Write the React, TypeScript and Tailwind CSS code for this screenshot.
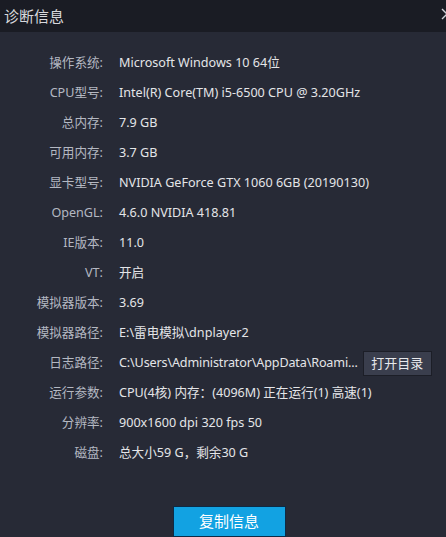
import React from "react";

const rows: { label: string; value: string; action?: string }[] = [
  { label: "操作系统:", value: "Microsoft Windows 10 64位" },
  { label: "CPU型号:", value: "Intel(R) Core(TM) i5-6500 CPU @ 3.20GHz" },
  { label: "总内存:", value: "7.9 GB" },
  { label: "可用内存:", value: "3.7 GB" },
  { label: "显卡型号:", value: "NVIDIA GeForce GTX 1060 6GB (20190130)" },
  { label: "OpenGL:", value: "4.6.0 NVIDIA 418.81" },
  { label: "IE版本:", value: "11.0" },
  { label: "VT:", value: "开启" },
  { label: "模拟器版本:", value: "3.69" },
  { label: "模拟器路径:", value: "E:\\雷电模拟\\dnplayer2" },
  { label: "日志路径:", value: "C:\\Users\\Administrator\\AppData\\Roami...", action: "打开目录" },
  { label: "运行参数:", value: "CPU(4核) 内存：(4096M) 正在运行(1) 高速(1)" },
  { label: "分辨率:", value: "900x1600 dpi 320 fps 50" },
  { label: "磁盘:", value: "总大小59 G，剩余30 G" },
];

export default function App() {
  return (
    <div
      className="w-[446px] h-[537px] overflow-hidden flex flex-col bg-[#272a36]"
      style={{ fontFamily: '"Noto Sans", "Noto Sans CJK SC", sans-serif' }}
    >
      {/* Title bar */}
      <div className="h-[32px] shrink-0 flex items-center justify-between bg-[#1a1c24] pl-[4px]">
        <span className="text-[15px] text-[#d8d9dd] leading-none">诊断信息</span>
        <svg className="mr-[-7px] mb-[4px]" width="12" height="12" viewBox="0 0 12 12">
          <path d="M1 1 L11 11 M11 1 L1 11" stroke="#d0d2d8" strokeWidth="1.4" />
        </svg>
      </div>

      {/* Info rows */}
      <div className="pt-[16px] flex flex-col">
        {rows.map(({ label, value, action }) => (
          <div key={label} className="h-[30px] flex items-center text-[12.6px]">
            <span className="w-[103px] shrink-0 text-right text-[#b4b8c2]">{label}</span>
            <span
              className={
                action
                  ? "ml-[16px] shrink-0 text-[#e4e5e8] whitespace-nowrap tracking-[-0.15px]"
                  : "ml-[16px] shrink-0 text-[#e4e5e8] whitespace-nowrap"
              }
            >
              {value}
            </span>
            {action && (
              <button className="ml-[5px] w-[69px] h-[25px] shrink-0 whitespace-nowrap bg-[#3a3e4d] border border-[#1c1e27] text-[#e8e9ec] text-[13px] leading-none">
                {action}
              </button>
            )}
          </div>
        ))}
      </div>

      {/* Footer button */}
      <div className="mt-auto flex justify-center pl-[12px]">
        <button className="w-[113px] h-[31px] bg-[#12a2e2] border border-[#0d2a45] text-white text-[15px] leading-none">
          复制信息
        </button>
      </div>
    </div>
  );
}
